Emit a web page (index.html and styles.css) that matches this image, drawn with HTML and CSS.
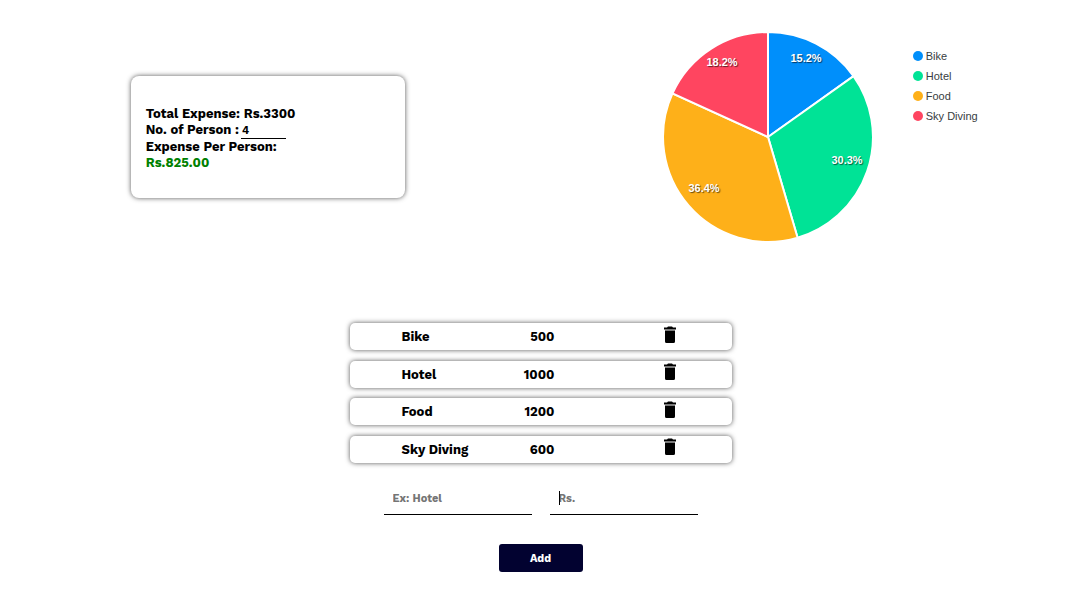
FILE: index.html
```html
<!DOCTYPE html>
<html lang="en">
<head>
<meta charset="utf-8">
<title>Trip Expenses</title>
<link rel="stylesheet" href="styles.css">
</head>
<body>
<main class="page">
  <section class="overview">
    <div class="summary">
      <p>Total Expense: Rs.3300</p>
      <p class="people"><label for="persons">No. of Person :</label><input class="persons" id="persons" type="text" inputmode="numeric" value="4"></p>
      <p>Expense Per Person:</p>
      <p class="share">Rs.825.00</p>
    </div>
    <div class="chart">
      <svg class="pie" viewBox="-105 -105 210 210" role="img" aria-label="Expense share by item">
        <g class="slices">
          <path fill="#008ffb" d="M0 0V-105A105 105 0 0 1 85.5 -60.9Z"/>
          <path fill="#00e396" d="M0 0L85.5 -60.9A105 105 0 0 1 29.6 100.7Z"/>
          <path fill="#feb019" d="M0 0L29.6 100.7A105 105 0 0 1 -95.5 -43.6Z"/>
          <path fill="#ff4560" d="M0 0L-95.5 -43.6A105 105 0 0 1 0 -105Z"/>
        </g>
        <g class="shares">
          <text x="38" y="-75">15.2%</text>
          <text x="79" y="27">30.3%</text>
          <text x="-64" y="55">36.4%</text>
          <text x="-46" y="-71">18.2%</text>
        </g>
      </svg>
      <ul class="legend">
        <li><span class="dot blue"></span>Bike</li>
        <li><span class="dot green"></span>Hotel</li>
        <li><span class="dot orange"></span>Food</li>
        <li><span class="dot red"></span>Sky Diving</li>
      </ul>
    </div>
  </section>
  <ul class="expenses">
    <li class="expense"><span>Bike</span><span class="amount">500</span><button class="remove" type="button" aria-label="Delete Bike"><svg viewBox="0 0 14 18"><path d="M1 1.5H4L5 .5H9L10 1.5H13V3.5H1ZM2 4.5H12V15.5Q12 17 10.5 17H3.5Q2 17 2 15.5Z"/><path class="rim" d="M2 3.5H12V4.5H2Z"/></svg></button></li>
    <li class="expense"><span>Hotel</span><span class="amount">1000</span><button class="remove" type="button" aria-label="Delete Hotel"><svg viewBox="0 0 14 18"><path d="M1 1.5H4L5 .5H9L10 1.5H13V3.5H1ZM2 4.5H12V15.5Q12 17 10.5 17H3.5Q2 17 2 15.5Z"/><path class="rim" d="M2 3.5H12V4.5H2Z"/></svg></button></li>
    <li class="expense"><span>Food</span><span class="amount">1200</span><button class="remove" type="button" aria-label="Delete Food"><svg viewBox="0 0 14 18"><path d="M1 1.5H4L5 .5H9L10 1.5H13V3.5H1ZM2 4.5H12V15.5Q12 17 10.5 17H3.5Q2 17 2 15.5Z"/><path class="rim" d="M2 3.5H12V4.5H2Z"/></svg></button></li>
    <li class="expense"><span>Sky Diving</span><span class="amount">600</span><button class="remove" type="button" aria-label="Delete Sky Diving"><svg viewBox="0 0 14 18"><path d="M1 1.5H4L5 .5H9L10 1.5H13V3.5H1ZM2 4.5H12V15.5Q12 17 10.5 17H3.5Q2 17 2 15.5Z"/><path class="rim" d="M2 3.5H12V4.5H2Z"/></svg></button></li>
  </ul>
  <form class="entry">
    <div class="fields">
      <input class="field" type="text" placeholder="Ex: Hotel" aria-label="Expense name">
      <div class="active">
        <input class="field" type="text" inputmode="numeric" placeholder="Rs." aria-label="Amount">
      </div>
    </div>
    <button class="add" type="button">Add</button>
  </form>
</main>
</body>
</html>
```
FILE: styles.css
```css
* {
  box-sizing: border-box;
}

body {
  margin: 0;
  background: #fff;
  color: #000;
  font: bold 13px/16px "Work Sans", Inter, "Liberation Sans", sans-serif;
}

p, ul {
  margin: 0;
  padding: 0;
  list-style: none;
}

input, button {
  margin: 0;
  border: 0;
  border-radius: 0;
  background: none;
  color: inherit;
  font: inherit;
}

.page {
  display: flex;
  flex-direction: column;
  align-items: center;
  padding: 32px 0 0 2px;
}

.overview {
  display: grid;
  grid-template-columns: 1fr 1fr;
  width: 100%;
  margin-bottom: 81px;
}

.summary {
  justify-self: center;
  align-self: center;
  width: 274px;
  margin-right: 7px;
  padding: 30px 15px 27px;
  border-radius: 8px;
  box-shadow: 0 0 5px #555;
}

.people {
  display: flex;
  gap: 2px;
}

.persons {
  width: 45px;
  height: 17px;
  padding: 0 1px;
  border-bottom: 1px solid #000;
  font-size: 11px;
  outline: 0;
}

.share {
  color: #008000;
}

.chart {
  display: flex;
  align-items: flex-start;
  justify-content: center;
  gap: 40px;
  padding-left: 21px;
}

.pie {
  width: 210px;
  height: 210px;
}

.slices {
  stroke: #fff;
  stroke-width: 2px;
}

.shares {
  fill: #fff;
  font: bold 11px "Liberation Sans", sans-serif;
  text-anchor: middle;
  text-shadow: 1px 1px 1px rgba(0, 0, 0, 0.6);
}

.legend {
  display: grid;
  gap: 4px;
  padding-top: 16px;
  color: #373d3f;
  font: 11px/16px "Liberation Sans", sans-serif;
}

.legend li {
  display: flex;
  align-items: center;
  gap: 3px;
}

.dot {
  width: 10px;
  height: 10px;
  border-radius: 50%;
}

.blue { background: #008ffb; }
.green { background: #00e396; }
.orange { background: #feb019; }
.red { background: #ff4560; }

.expenses {
  display: grid;
  align-content: space-between;
  width: 382px;
  max-width: 100%;
  min-height: 140px;
}

.expense {
  display: grid;
  grid-template-columns: 80px 73px 1fr;
  align-items: center;
  padding: 1px 0 0 52px;
  height: 27px;
  border-radius: 5px;
  box-shadow: 0 0 5px #555;
}

.amount {
  text-align: right;
}

.remove {
  justify-self: center;
  align-self: start;
  height: 20px;
  padding: 1px 0 0;
  margin-right: -53px;
}

.remove svg {
  display: block;
  width: 14px;
  height: 18px;
}

.rim {
  fill: #777;
}

.entry {
  display: grid;
  justify-items: center;
  gap: 29px;
  margin-top: 19px;
}

.fields {
  display: flex;
  gap: 18px;
}

.field {
  display: block;
  width: 148px;
  height: 33px;
  padding: 0 9px;
  border-bottom: 1px solid #000;
  font-size: 11px;
  outline: 0;
}

.field::placeholder {
  color: #757575;
}

.active {
  position: relative;
}

/* Text cursor of the field being edited */
.active::before {
  content: "";
  position: absolute;
  top: 9px;
  left: 9px;
  width: 1px;
  height: 14px;
  background: #000;
}

.add {
  width: 84px;
  height: 28px;
  padding: 1px 0 0;
  border-radius: 3px;
  background: #020230;
  color: #fff;
  font-size: 11px;
}
```
